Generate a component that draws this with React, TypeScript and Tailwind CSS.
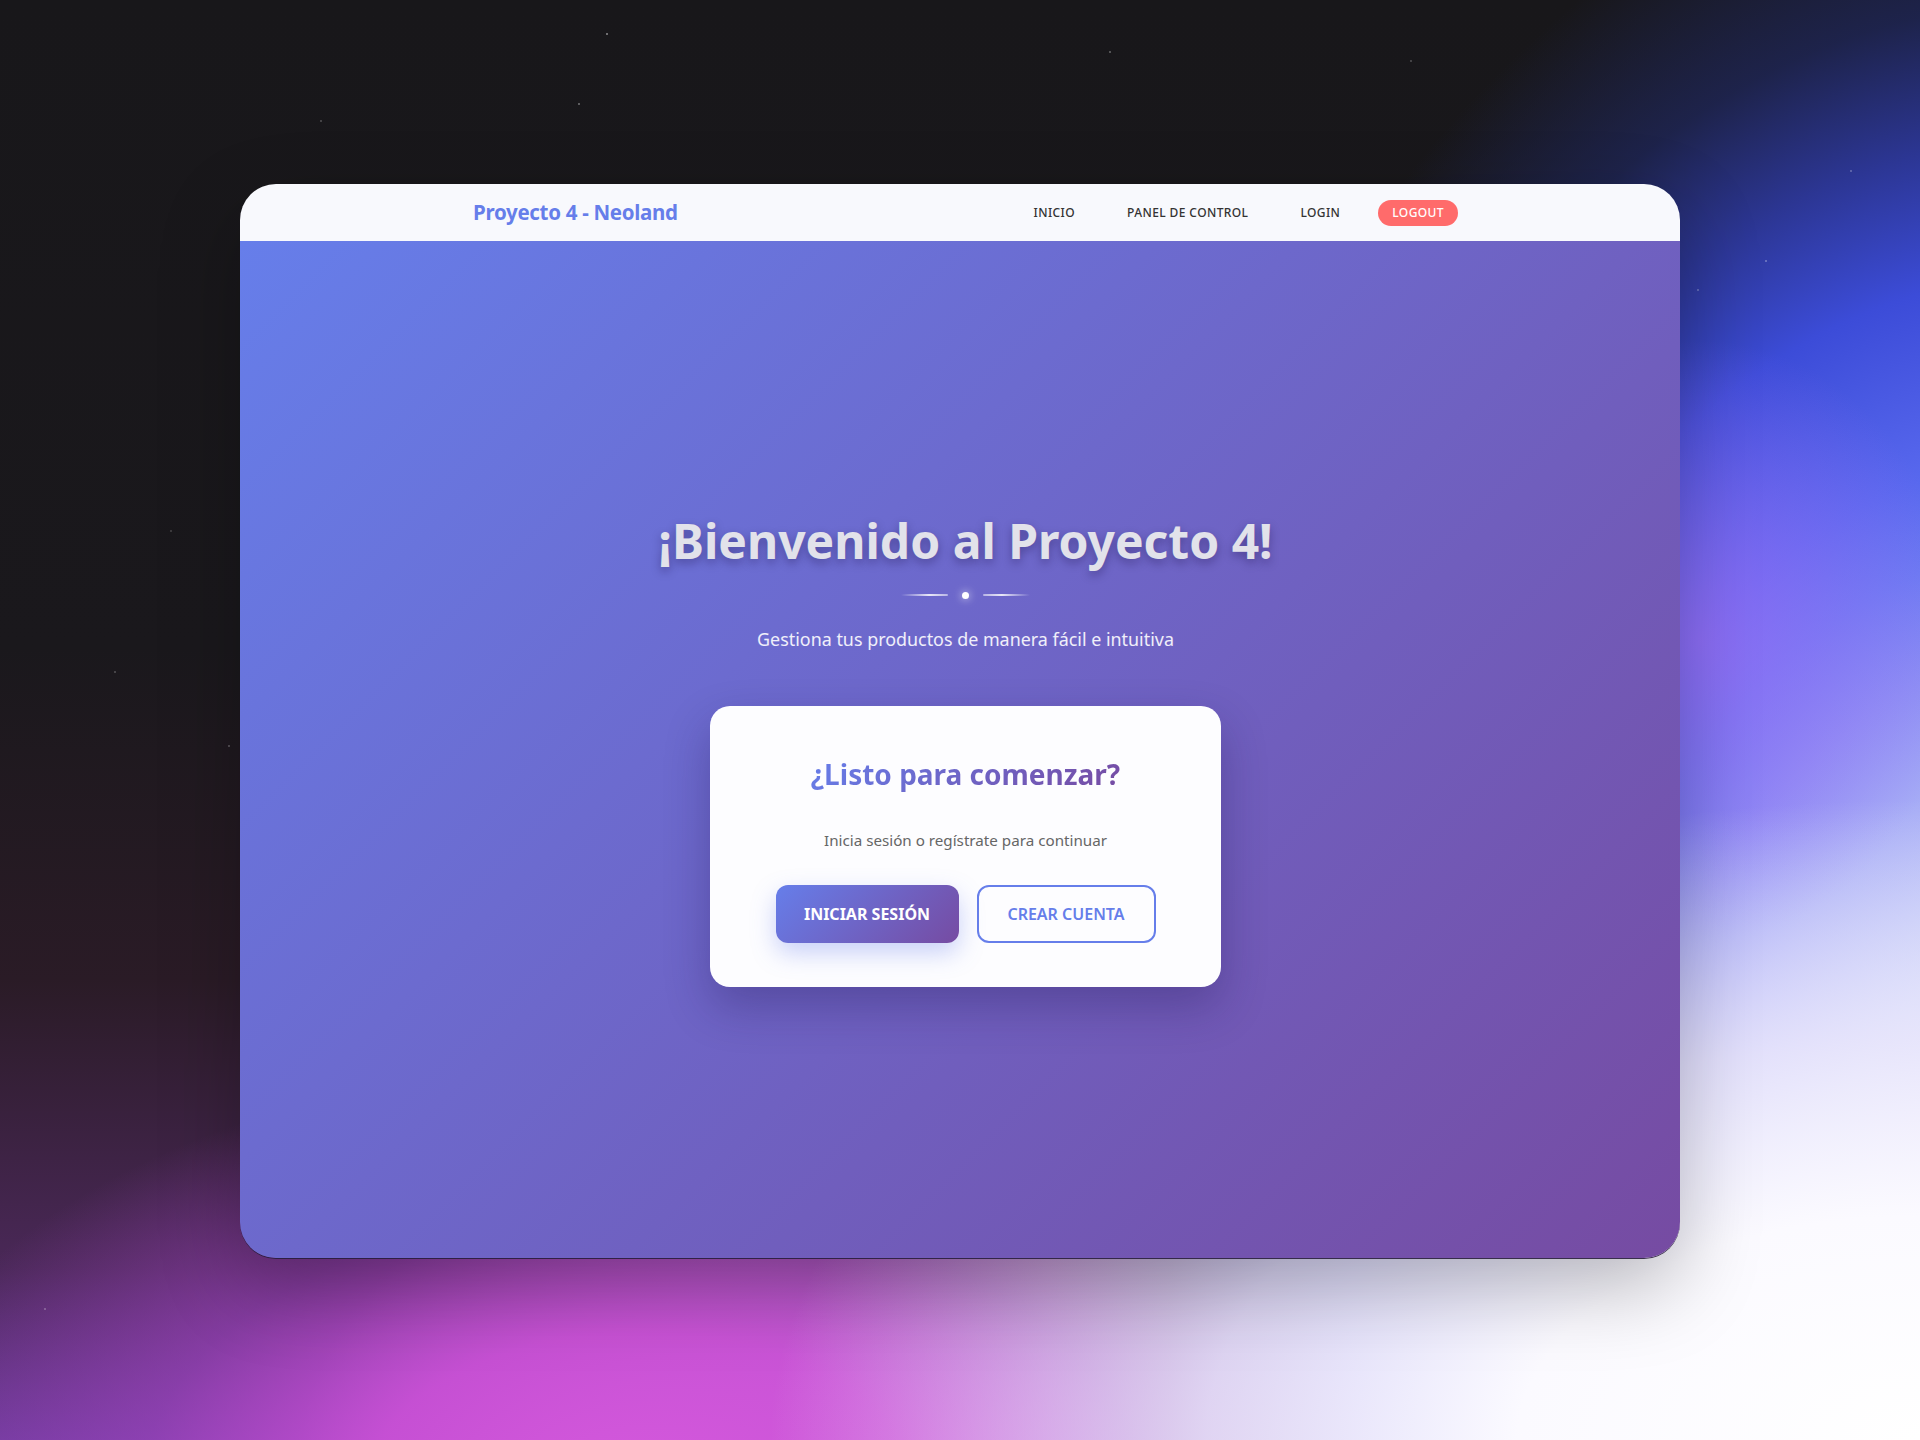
import React from "react";

const STARS: { x: number; y: number; o: number }[] = [
  { x: 606, y: 33, o: 0.5 },
  { x: 578, y: 103, o: 0.4 },
  { x: 1109, y: 51, o: 0.35 },
  { x: 228, y: 745, o: 0.3 },
  { x: 114, y: 671, o: 0.25 },
  { x: 44, y: 1308, o: 0.3 },
  { x: 1765, y: 260, o: 0.35 },
  { x: 1697, y: 289, o: 0.3 },
  { x: 1410, y: 60, o: 0.25 },
  { x: 1850, y: 170, o: 0.3 },
  { x: 170, y: 530, o: 0.2 },
  { x: 320, y: 120, o: 0.25 },
];

const NAV_LINKS = ["Inicio", "Panel de control", "Login"];

export default function App() {
  return (
    <div className="relative flex h-[1440px] w-full justify-center overflow-hidden bg-[radial-gradient(ellipse_1150px_640px_at_1920px_1440px,#ffffff_0%,#fbfaff_35%,rgba(236,232,252,0.85)_62%,rgba(230,226,250,0)_100%),radial-gradient(ellipse_760px_420px_at_640px_1480px,#d458dc_0%,rgba(204,80,216,0.92)_35%,rgba(170,70,200,0.55)_65%,rgba(140,60,180,0)_100%),radial-gradient(ellipse_650px_380px_at_950px_1460px,rgba(228,176,238,0.95)_0%,rgba(228,176,238,0)_100%),radial-gradient(ellipse_260px_300px_at_1700px_640px,rgba(160,110,246,0.7)_0%,rgba(160,110,246,0)_100%),radial-gradient(ellipse_1000px_1520px_at_2050px_1340px,#ffffff_0%,#f2f4fc_10%,#c8d2f8_26%,#a8aef6_37%,#8c90f4_45%,#6a7af2_52%,#5868ee_58%,#3c4cd8_70%,#2c3694_79%,rgba(30,36,80,0.9)_88%,rgba(26,26,32,0)_100%),linear-gradient(180deg,#18171a_0%,#1a181c_45%,#2a1b26_68%,#4a2858_88%,#6a3a98_100%)] pt-[184px] font-['Noto_Sans','Open_Sans',sans-serif]">
      {STARS.map((s, i) => (
        <span
          key={i}
          className="absolute h-[2px] w-[2px] rounded-full bg-white"
          style={{ left: s.x, top: s.y, opacity: s.o }}
        />
      ))}

      <div className="relative flex h-[1074px] w-[1440px] flex-col overflow-hidden rounded-[36px] shadow-[0_1px_0_rgba(40,30,60,0.9),0_30px_80px_rgba(0,0,0,0.25)]">
        {/* navbar */}
        <header className="flex h-[57px] shrink-0 items-center justify-between bg-[#f8f9fd] pl-[233px] pr-[222px]">
          <div className="text-[20.5px] font-bold tracking-[-0.3px] text-[#667eea]">
            Proyecto 4 - Neoland
          </div>
          <nav className="flex items-center gap-6">
            {NAV_LINKS.map((l) => (
              <a
                key={l}
                className="px-[14px] py-[6px] text-[12px] font-medium uppercase tracking-[0.4px] text-[#333]"
              >
                {l}
              </a>
            ))}
            <button className="rounded-full bg-[#ff6b6b] px-[14px] py-[4px] text-[12px] font-medium uppercase tracking-[0.4px] text-white">
              Logout
            </button>
          </nav>
        </header>

        {/* hero */}
        <main className="flex flex-1 flex-col items-center justify-center bg-[linear-gradient(135deg,#667eea_0%,#764ba2_100%)] pl-[11px]">
          <h1 className="text-[48px] font-bold leading-[58px] text-[#e2e2ea] [text-shadow:0_4px_10px_rgba(20,10,60,0.35)]">
            ¡Bienvenido al Proyecto 4!
          </h1>

          <div className="mt-[22px] flex items-center gap-[14px]">
            <span className="h-[2px] w-[47px] rounded-full bg-[linear-gradient(90deg,rgba(255,255,255,0),rgba(255,255,255,0.85)_60%,rgba(255,255,255,0.5))]" />
            <span className="h-[7px] w-[7px] rounded-full bg-white shadow-[0_0_8px_rgba(255,255,255,0.8)]" />
            <span className="h-[2px] w-[47px] rounded-full bg-[linear-gradient(90deg,rgba(255,255,255,0.5),rgba(255,255,255,0.85)_40%,rgba(255,255,255,0))]" />
          </div>

          <p className="mt-[27px] text-[17.9px] text-white/90">
            Gestiona tus productos de manera fácil e intuitiva
          </p>

          <div className="mt-[53px] flex w-[511px] flex-col items-center rounded-[20px] bg-[#fdfdff] px-12 pb-[44px] pt-[50px] shadow-[0_20px_45px_rgba(30,20,80,0.3)]">
            <h2 className="bg-[linear-gradient(135deg,#667eea_0%,#764ba2_100%)] bg-clip-text text-[28px] font-bold leading-[36px] text-transparent">
              ¿Listo para comenzar?
            </h2>
            <p className="mt-[37px] text-[15.2px] text-[#666]">
              Inicia sesión o regístrate para continuar
            </p>
            <div className="mt-[34px] flex gap-[18px]">
              <button className="flex h-[58px] w-[183px] items-center justify-center rounded-[12px] bg-[linear-gradient(135deg,#667eea_0%,#764ba2_100%)] text-[16px] font-bold uppercase text-white shadow-[0_10px_25px_rgba(102,126,234,0.35)]">
                Iniciar sesión
              </button>
              <button className="flex h-[58px] w-[179px] items-center justify-center rounded-[12px] border-2 border-[#667eea] bg-transparent text-[16px] font-semibold uppercase text-[#667eea]">
                Crear cuenta
              </button>
            </div>
          </div>
        </main>
      </div>
    </div>
  );
}
